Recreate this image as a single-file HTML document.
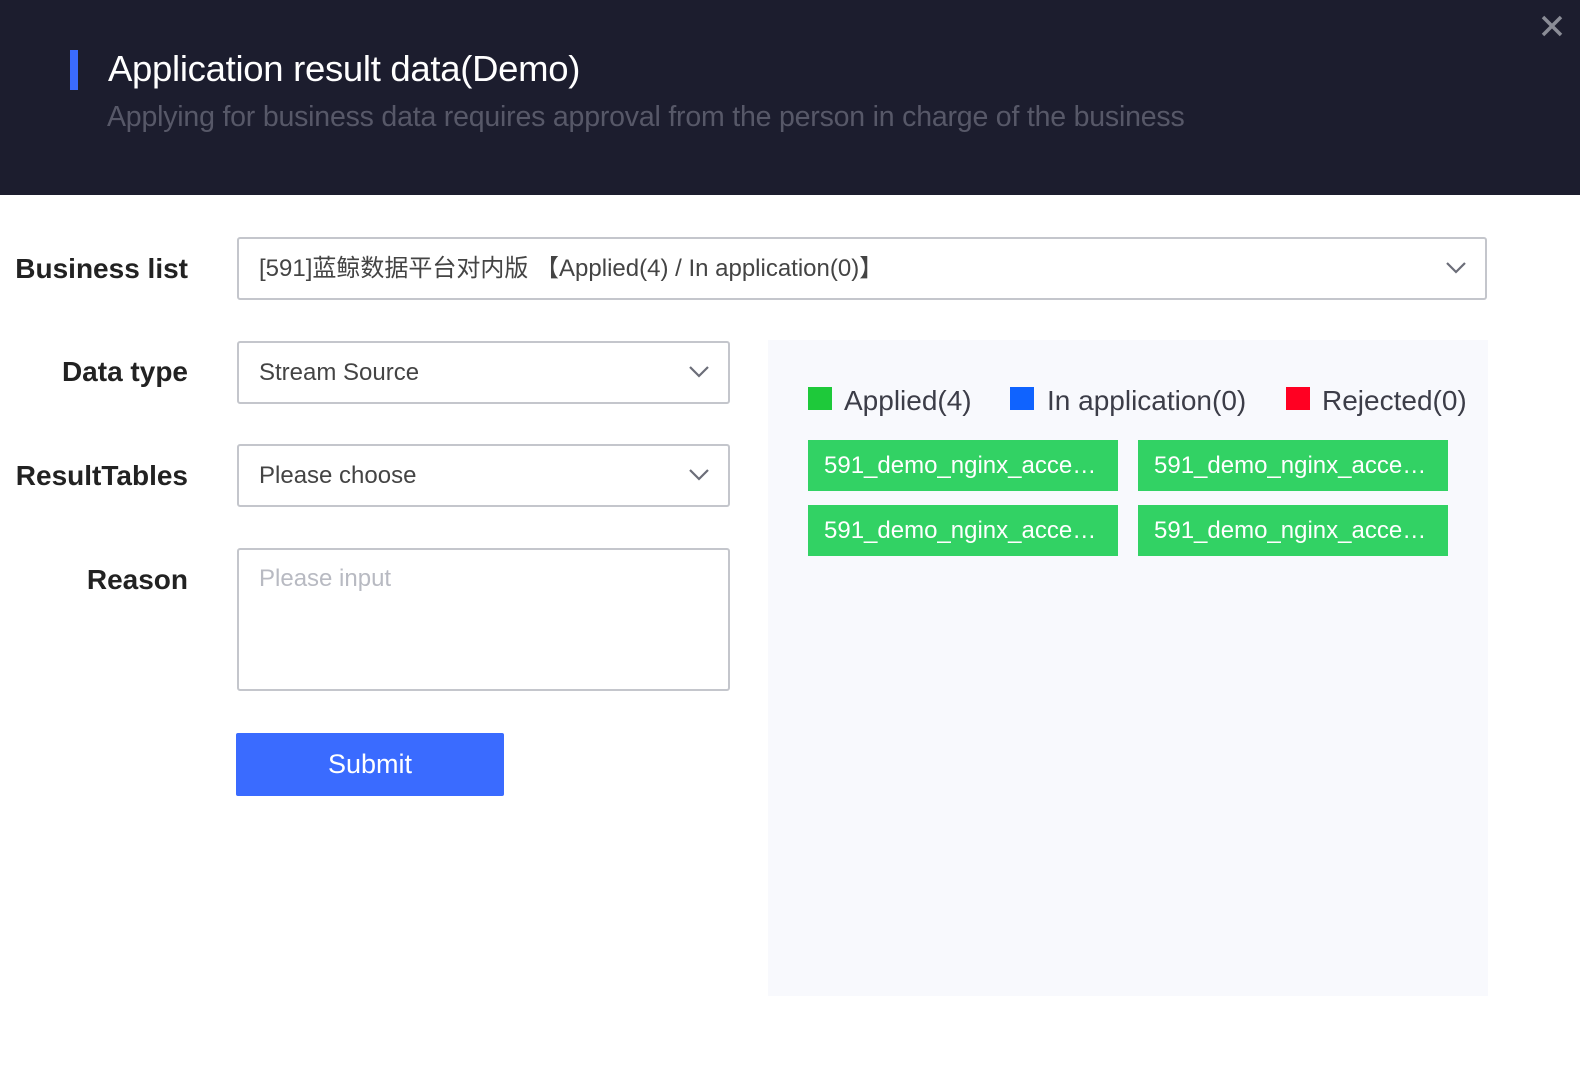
<!DOCTYPE html>
<html><head><meta charset="utf-8"><style>
*{box-sizing:border-box;margin:0;padding:0}
body{width:1580px;height:1070px;background:#fff;font-family:"Liberation Sans","Noto Sans CJK SC",sans-serif;position:relative;overflow:hidden}
.hdr{position:absolute;left:0;top:0;width:1580px;height:195px;background:#1c1d2e}
.bar{position:absolute;left:70px;top:50px;width:8px;height:40px;background:#3a6bff}
.title{position:absolute;left:108px;top:48px;font-size:36.5px;color:#fff;line-height:42px;letter-spacing:-0.3px}
.sub{position:absolute;left:107px;top:101px;font-size:28.5px;color:#575868;line-height:32px;letter-spacing:-0.2px}
.x{position:absolute;left:1540px;top:14px;width:24px;height:24px}
.lbl{position:absolute;right:1392px;font-size:28px;font-weight:bold;color:#222;line-height:32px;text-align:right;white-space:nowrap}
.inp{position:absolute;left:237px;width:493px;height:63px;border:2px solid #c4c6cc;border-radius:3px;font-size:24px;color:#444;line-height:59px;padding-left:20px;white-space:nowrap}
.chev{position:absolute;right:18px;top:22px;width:22px;height:14px}
.panel{position:absolute;left:768px;top:340px;width:720px;height:656px;background:#f8f9fd}
.leg{position:absolute;top:384px;font-size:28px;color:#3c3d48;line-height:34px;white-space:nowrap}
.sq{position:absolute;top:387px;width:24px;height:23px}
.tag{position:absolute;width:310px;height:51px;background:#32d264;color:#fff;font-size:24px;line-height:51px;padding-left:16px;white-space:nowrap}
.btn{position:absolute;left:236px;top:733px;width:268px;height:63px;background:#3a6bff;border-radius:2px;color:#fff;font-size:27px;line-height:63px;text-align:center}
</style></head><body>
<div class="hdr">
<div class="bar"></div>
<div class="title">Application result data(Demo)</div>
<div class="sub">Applying for business data requires approval from the person in charge of the business</div>
<svg class="x" viewBox="0 0 24 24"><path d="M3 3L21 21M21 3L3 21" stroke="#8a8c96" stroke-width="3.5"/></svg>
</div>

<div class="lbl" style="top:253px">Business list</div>
<div class="inp" style="top:237px;width:1250px">[591]蓝鲸数据平台对内版 【Applied(4) / In application(0)】<svg class="chev" viewBox="0 0 22 14"><path d="M2 2L11 11L20 2" fill="none" stroke="#6b6d78" stroke-width="2.2"/></svg></div>

<div class="lbl" style="top:356px">Data type</div>
<div class="inp" style="top:341px">Stream Source<svg class="chev" viewBox="0 0 22 14"><path d="M2 2L11 11L20 2" fill="none" stroke="#6b6d78" stroke-width="2.2"/></svg></div>

<div class="lbl" style="top:460px">ResultTables</div>
<div class="inp" style="top:444px">Please choose<svg class="chev" viewBox="0 0 22 14"><path d="M2 2L11 11L20 2" fill="none" stroke="#6b6d78" stroke-width="2.2"/></svg></div>

<div class="lbl" style="top:564px">Reason</div>
<div class="inp" style="top:548px;height:143px;line-height:58px;color:#b8bac2">Please input</div>

<div class="btn">Submit</div>

<div class="panel"></div>
<div class="sq" style="left:808px;background:#1ec93a"></div><div class="leg" style="left:844px">Applied(4)</div>
<div class="sq" style="left:1010px;background:#0f63ff"></div><div class="leg" style="left:1047px">In application(0)</div>
<div class="sq" style="left:1286px;background:#ff0022"></div><div class="leg" style="left:1322px">Rejected(0)</div>
<div class="tag" style="left:808px;top:440px">591_demo_nginx_acce…</div>
<div class="tag" style="left:1138px;top:440px">591_demo_nginx_acce…</div>
<div class="tag" style="left:808px;top:505px">591_demo_nginx_acce…</div>
<div class="tag" style="left:1138px;top:505px">591_demo_nginx_acce…</div>
</body></html>
